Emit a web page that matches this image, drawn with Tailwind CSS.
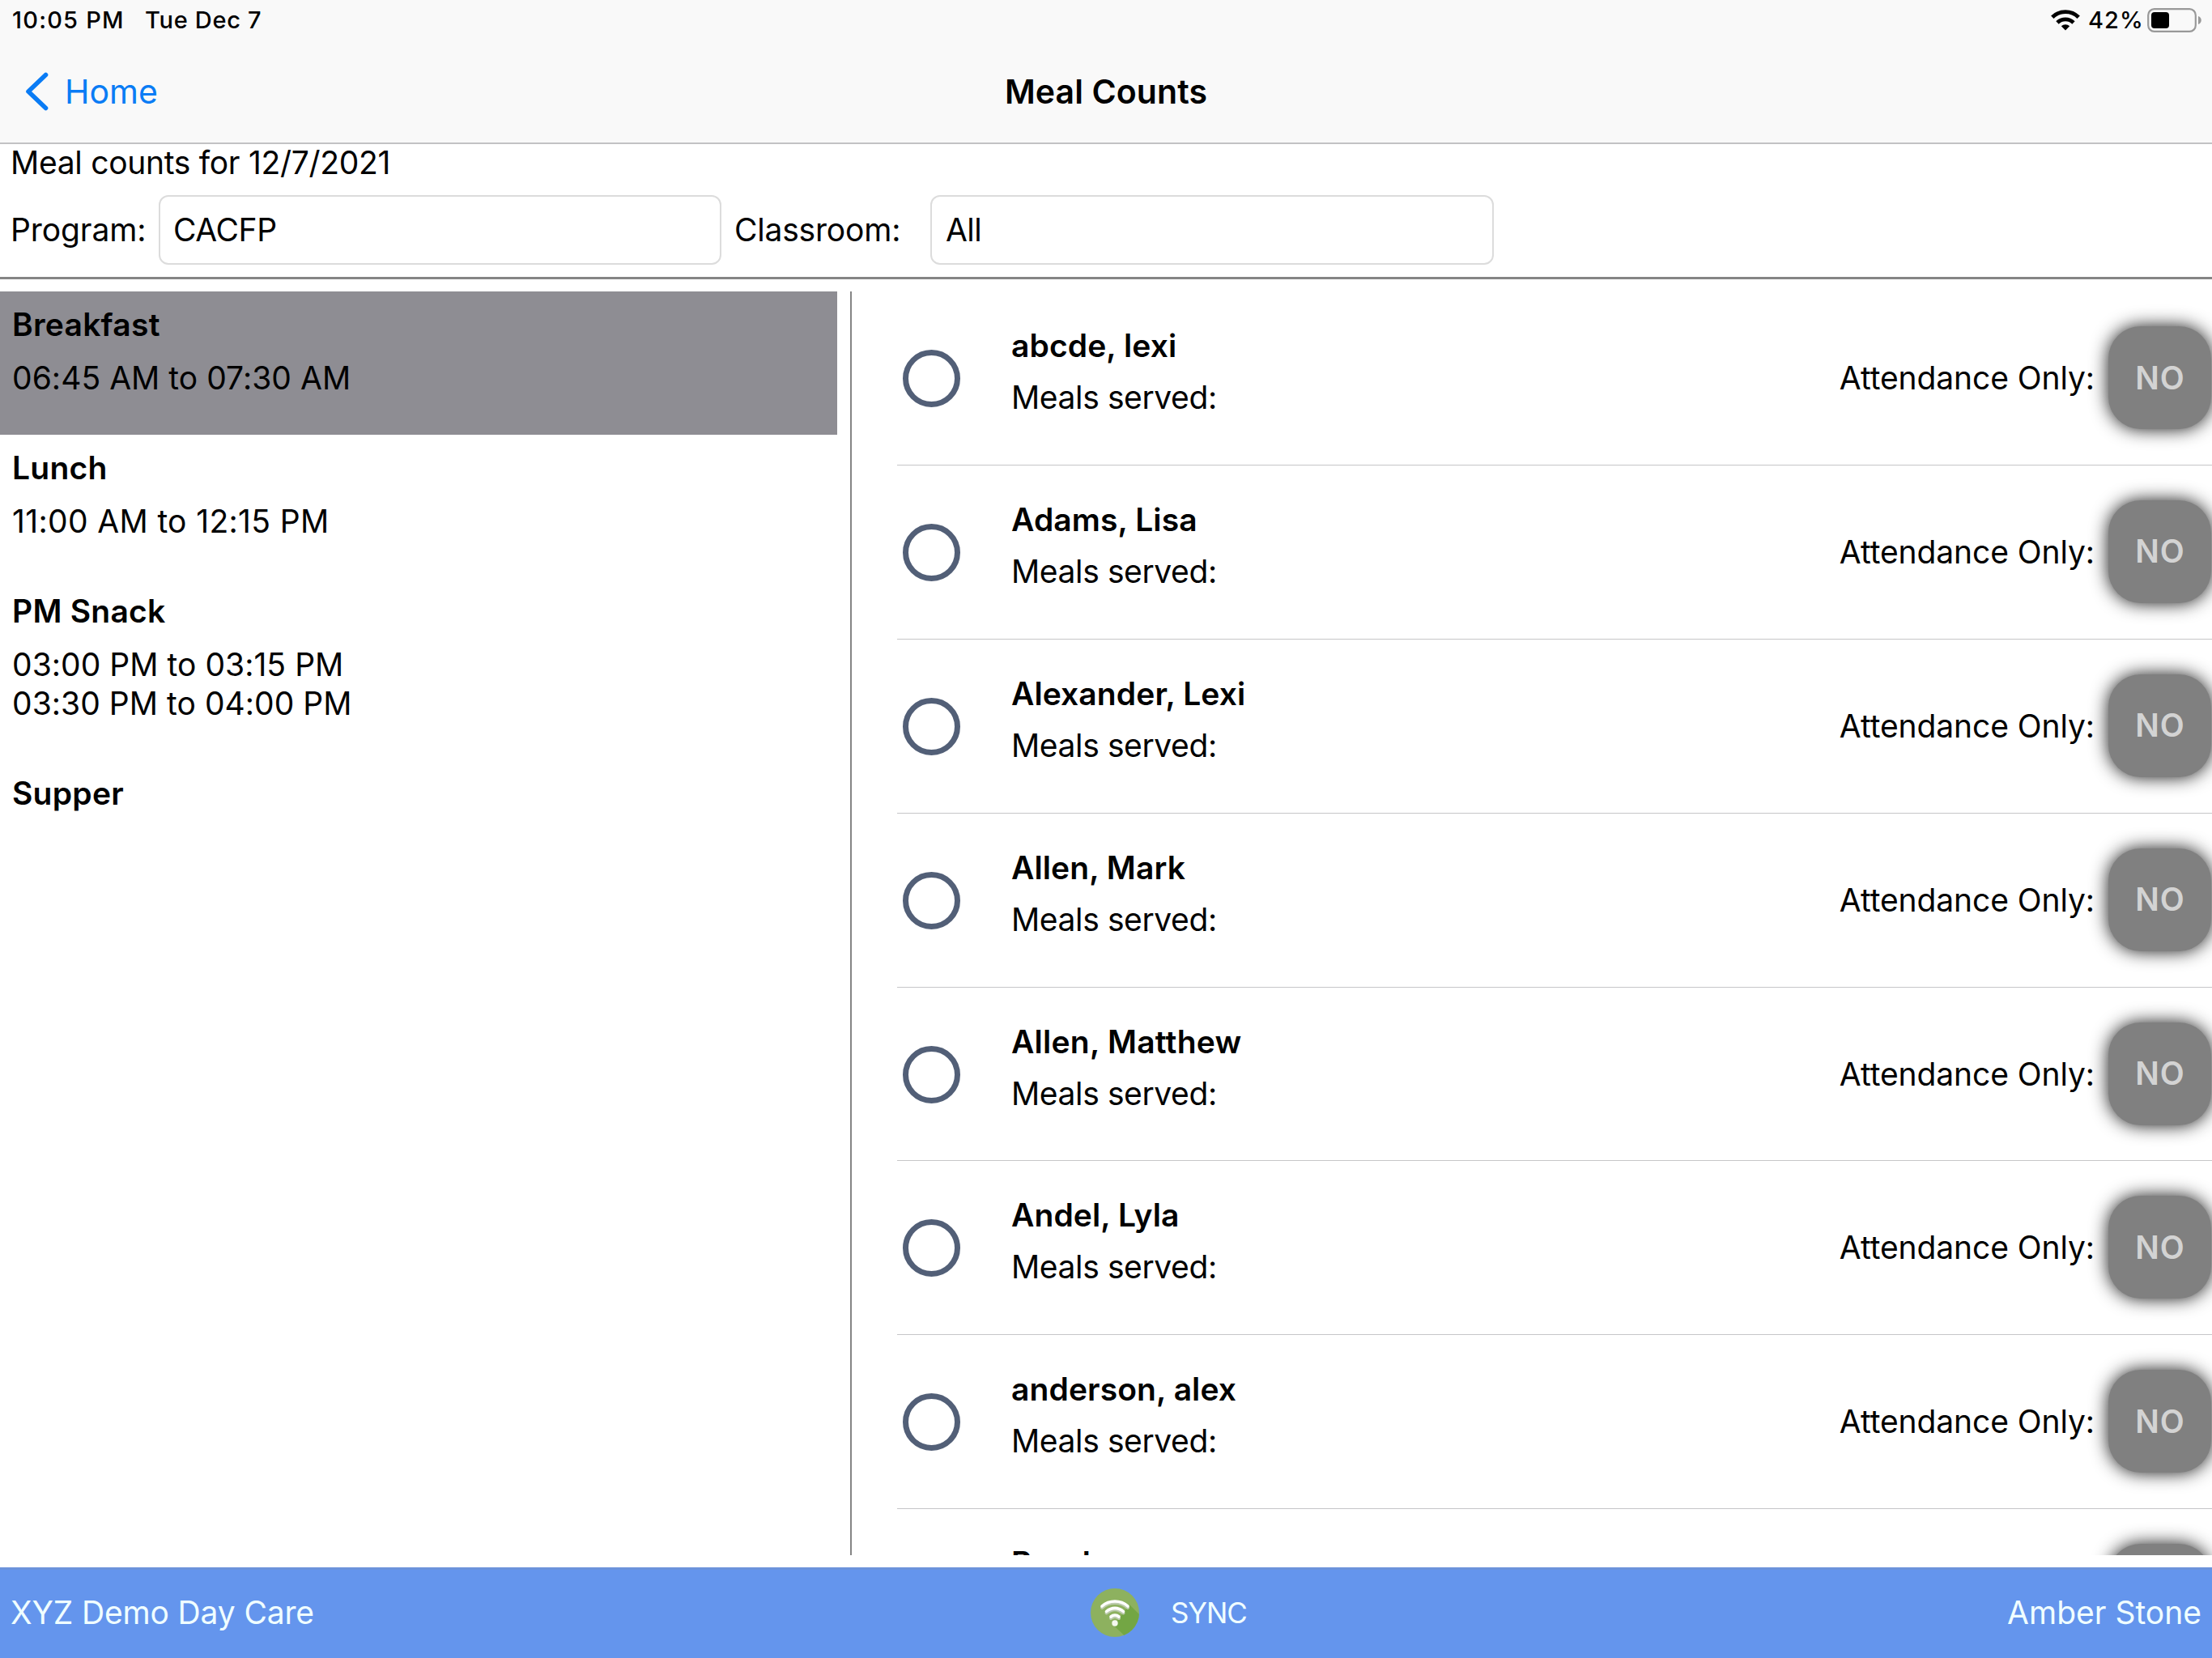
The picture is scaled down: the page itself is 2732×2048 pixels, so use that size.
<!DOCTYPE html>
<html lang="en">
<head>
<meta charset="utf-8">
<title>Meal Counts</title>
<script src="https://cdn.jsdelivr.net/npm/@tailwindcss/browser@4"></script>
</head>
<body class="w-[2732px] h-[2048px] overflow-hidden bg-white text-black font-['Inter',sans-serif] text-[39px] leading-[48px] flex flex-col whitespace-nowrap">

  <header class="h-[178px] shrink-0 bg-[#f9f9f9] border-b-2 border-[#c2c2c4] flex flex-col">
    <!-- status bar -->
    <div class="h-[49px] shrink-0 flex items-center justify-between pl-[15px] pr-[12px] text-[29px] font-medium leading-[49px]">
      <div class="flex">
        <span class="w-[164px] tracking-[1.2px]">10:05 PM</span>
        <span class="tracking-[0.7px]">Tue Dec 7</span>
      </div>
      <div class="flex items-center">
        <svg class="w-[36px] h-[26px] mr-[10px]" viewBox="0 0 36 26" fill="none" stroke="#000" stroke-width="4.8">
          <path d="M1.8 9.3C10.8 .4 25.200 .4 34.200 9.300"/>
          <path d="M8 15.900C13.700 10.400 22.300 10.400 28 15.900"/>
          <path d="M12.800 20.300C15.800 17.400 20.200 17.400 23.200 20.300L18 25.500Z" fill="#000" stroke="none"/>
        </svg>
        <span class="w-[73px] tracking-[1px]">42%</span>
        <svg class="w-[68px] h-[30px]" viewBox="0 0 68 30">
          <rect x="1.200" y="1.200" width="58.600" height="27.600" rx="7.500" fill="none" stroke="#999" stroke-width="2.200"/>
          <rect x="5" y="5" width="22" height="20" rx="4" fill="#000"/>
          <path d="M63 10C68 11.500 68 18.500 63 20Z" fill="#999"/>
        </svg>
      </div>
    </div>
    <!-- navigation bar -->
    <nav class="grow grid grid-cols-3 items-center text-[41px] leading-[50px] pt-[1px]">
      <a class="flex items-center text-[#0a7cf5] pl-[31px]">
        <svg class="w-[30px] h-[48px] mr-[19px]" viewBox="0 0 30 48" fill="none" stroke="#0a7cf5" stroke-width="5.600" stroke-linecap="round" stroke-linejoin="round"><path d="M25.500 3.500L4 24L25.500 44.500"/></svg>
        <span>Home</span>
      </a>
      <h1 class="text-center font-semibold tracking-[0.1px]">Meal Counts</h1>
    </nav>
  </header>

  <section class="h-[167px] shrink-0 border-b-3 border-[#858585] pl-[13px]">
    <p class="h-[63px] leading-[46px] tracking-[-0.3px]">Meal counts for 12/7/2021</p>
    <div class="h-[86px] flex items-center">
      <span class="w-[183px] tracking-[-0.1px]">Program:</span>
      <div class="w-[695px] h-[86px] border-2 border-[#dcdcdc] rounded-[12px] pl-[16px] flex items-center tracking-[-0.4px]">CACFP</div>
      <span class="w-[258px] pl-[16px] tracking-[-0.2px]">Classroom:</span>
      <div class="w-[696px] h-[86px] border-2 border-[#dcdcdc] rounded-[12px] pl-[17px] flex items-center tracking-[-0.6px]">All</div>
    </div>
  </section>

  <main class="h-[1591px] shrink-0 pt-[15px] pb-[15px] flex">
    <aside id="meals" class="w-[1034px] shrink-0"></aside>
    <section class="grow ml-[16px] border-l-2 border-[#858585] overflow-hidden">
      <ul id="children" class="ml-[56px]"></ul>
    </section>
  </main>

  <footer class="h-[112px] shrink-0 bg-[#6495ed] border-t-3 border-[#6c93db] text-[#f0ffff] grid grid-cols-[1347px_1fr_auto] items-center pr-[13px] pb-[3px]">
    <span class="pl-[13px] tracking-[-0.15px]">XYZ Demo Day Care</span>
    <div class="flex items-center">
      <svg class="w-[60px] h-[60px]" viewBox="0 0 60 60" fill="none">
        <defs><clipPath id="disc"><circle cx="30" cy="30" r="30"/></clipPath></defs>
        <circle cx="30" cy="30" r="30" fill="#8db15f"/>
        <path d="M48 20L72 44L50 66L27 44.500L33 40L42 28Z" fill="#73a644" clip-path="url(#disc)"/>
        <g stroke="#bccbad" stroke-width="4" stroke-linecap="round" transform="translate(0 1.500)">
          <path d="M14 22.500C23 14.500 37 14.500 46 22.500"/><path d="M19.500 29C26 23.500 34 23.500 40.500 29"/><path d="M25 35.500C28 33 32 33 35 35.500"/>
        </g>
        <g stroke="#fff" stroke-width="3.600" stroke-linecap="round">
          <path d="M14 22C23 14 37 14 46 22"/><path d="M19.500 28.500C26 23 34 23 40.500 28.500"/><path d="M25 35C28 32.500 32 32.500 35 35"/>
        </g>
        <circle cx="30" cy="43" r="3.700" fill="#f4f8ef"/>
      </svg>
      <span class="pl-[39px] text-[35px] tracking-[-1.1px]">SYNC</span>
    </div>
    <span>Amber Stone</span>
  </footer>

<script>
const meals = [
  { name: "Breakfast", times: ["06:45 AM to 07:30 AM"], selected: true },
  { name: "Lunch", times: ["11:00 AM to 12:15 PM"] },
  { name: "PM Snack", times: ["03:00 PM to 03:15 PM", "03:30 PM to 04:00 PM"] },
  { name: "Supper", times: [] },
];
document.getElementById("meals").innerHTML = meals.map(m => `
  <div class="pt-[17px] pb-[46px] pl-[15px] ${m.selected ? "bg-[#8e8d93]" : ""}">
    <h2 class="font-semibold tracking-[0.25px] mb-[18px]">${m.name}</h2>
    ${m.times.map(t => `<p class="${t.startsWith("11") ? "tracking-[0.35px]" : "tracking-[0.04px]"}">${t}</p>`).join("")}
  </div>`).join("");

const children = ["abcde, lexi", "Adams, Lisa", "Alexander, Lexi", "Allen, Mark", "Allen, Matthew", "Andel, Lyla", "anderson, alex", "Bond"];
document.getElementById("children").innerHTML = children.map((n, i) => {
  // the last row is scrolled out below its name
  const partial = i === children.length - 1;
  return `
  <li class="h-[214.9px] border-b border-[#c6c6c8] flex pt-[43px]">
    <div class="w-[71px] h-[71px] shrink-0 mt-[29px] ml-[7px] rounded-full border-[7px] border-[#525f77]"></div>
    <div class="grow ml-[63px]">
      <h3 class="font-semibold ${n.endsWith("Matthew") ? "tracking-[0.25px]" : "tracking-[0.1px]"} mb-[16px]">${n}</h3>
      ${partial ? "" : `<p class="tracking-[-0.39px]">Meals served:</p>`}
    </div>
    ${partial ? "" : `<span class="mt-[40px] mr-[17px] tracking-[-0.09px]">Attendance Only:</span>`}
    <div class="w-[127px] h-[127px] mr-px shrink-0 rounded-[40px] bg-[#808080] text-[#d3d3d3] font-semibold tracking-[1px] shadow-[0_0_22px_rgb(0_0_0/0.9)] flex items-center justify-center pl-px">${partial ? "" : "NO"}</div>
  </li>`;
}).join("");
</script>
</body>
</html>
